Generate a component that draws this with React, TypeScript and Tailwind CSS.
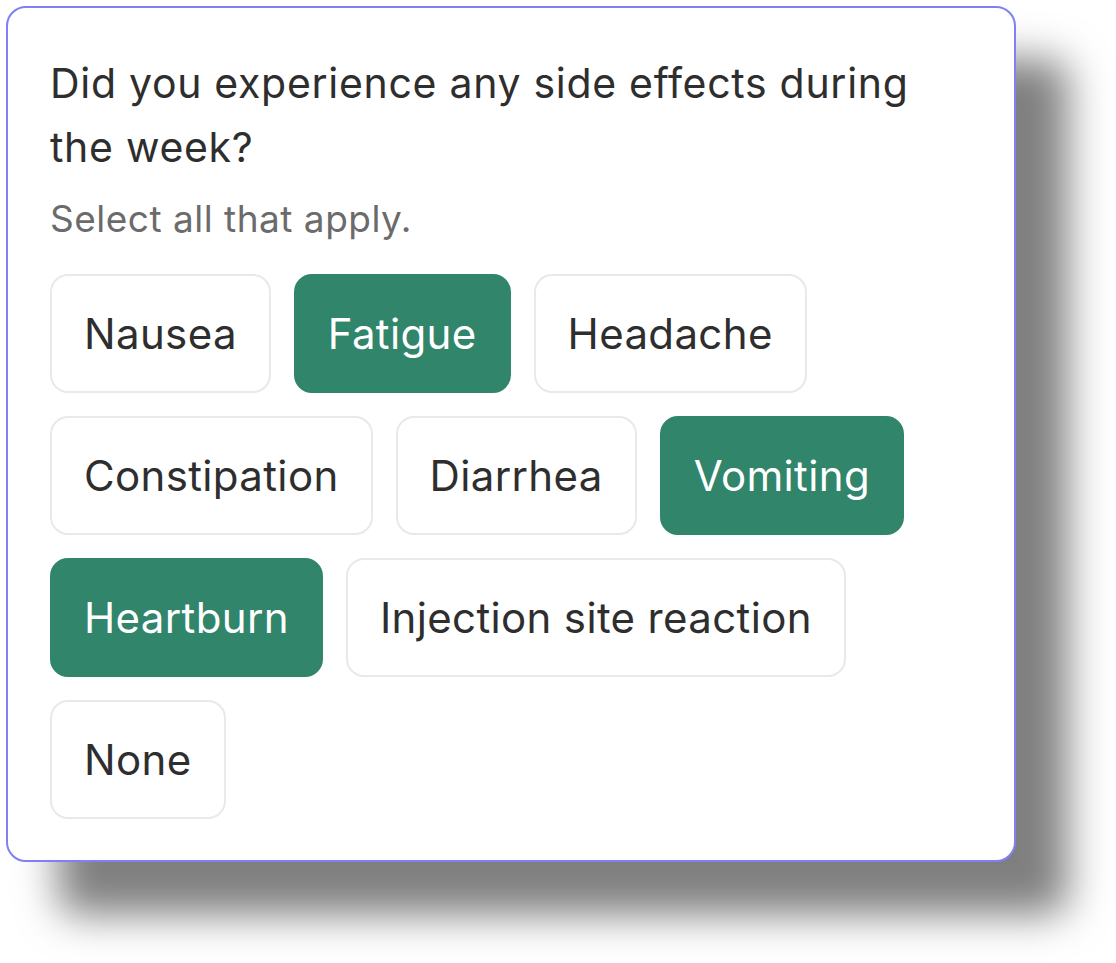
import React from "react";

const options: { label: string; selected: boolean }[] = [
  { label: "Nausea", selected: false },
  { label: "Fatigue", selected: true },
  { label: "Headache", selected: false },
  { label: "Constipation", selected: false },
  { label: "Diarrhea", selected: false },
  { label: "Vomiting", selected: true },
  { label: "Heartburn", selected: true },
  { label: "Injection site reaction", selected: false },
  { label: "None", selected: false },
];

export default function App() {
  return (
    <div className="min-h-screen w-full bg-white" style={{ fontFamily: "Inter, 'Noto Sans', sans-serif" }}>
      <div className="pl-[6px] pt-[6px]">
        <div className="w-[1010px] h-[856px] rounded-[20px] border-2 border-[#7f80f4] bg-white px-[42px] pt-[43px] shadow-[52px_53px_40px_rgba(0,0,0,0.5)]">
          <h1 className="max-w-[900px] text-[41px] leading-[64px] tracking-[0.7px] text-[#2e2e2e] font-normal">
            Did you experience any side effects during the week?
          </h1>
          <p className="mt-[18px] text-[37px] leading-[44px] tracking-[0.5px] text-[#6b6b6b]">Select all that apply.</p>
          <div className="mt-[33px] flex flex-wrap gap-[23px]">
            {options.map((o) =>
              o.selected ? (
                <div
                  key={o.label}
                  className="h-[119px] flex items-center px-[32px] rounded-[18px] bg-[#30856b] border-2 border-[#30856b] text-white text-[42px] tracking-[0.35px]"
                >
                  {o.label}
                </div>
              ) : (
                <div
                  key={o.label}
                  className="h-[119px] flex items-center px-[32px] rounded-[18px] bg-white border-2 border-[#e9e9e9] text-[#2e2e2e] text-[42px] tracking-[0.35px]"
                >
                  {o.label}
                </div>
              )
            )}
          </div>
        </div>
      </div>
    </div>
  );
}
